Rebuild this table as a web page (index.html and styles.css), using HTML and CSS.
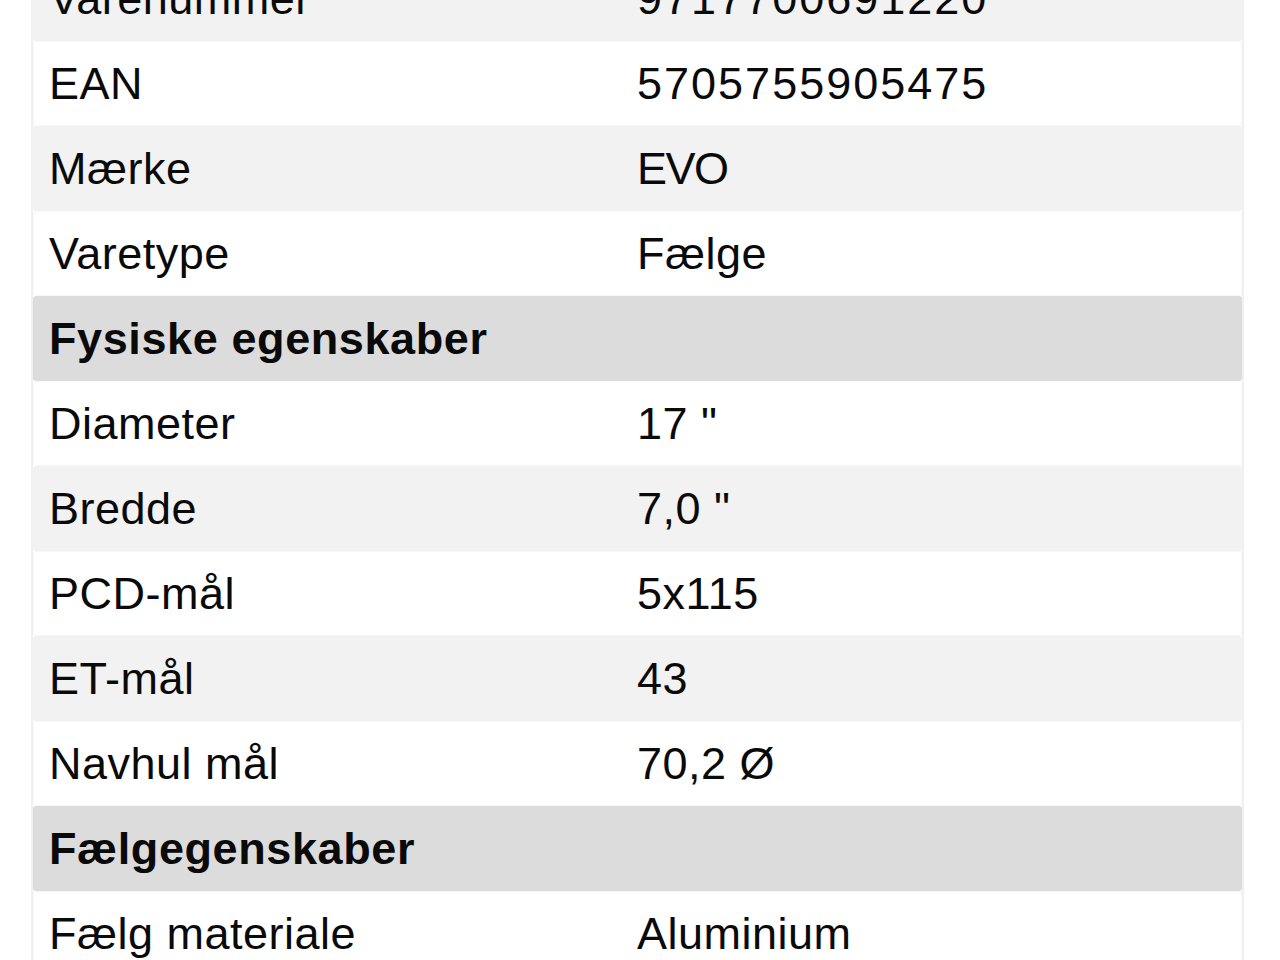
FILE: index.html
```html
<!DOCTYPE html>
<html lang="da">
<head>
<meta charset="utf-8">
<title>Specifikationer</title>
<link rel="stylesheet" href="styles.css">
</head>
<body>
<div class="specs">
  <div class="row alt"><div class="cell">Varenummer</div><div class="cell num">9717700691220</div></div>
  <div class="row"><div class="cell">EAN</div><div class="cell num">5705755905475</div></div>
  <div class="row alt"><div class="cell">Mærke</div><div class="cell tight">EVO</div></div>
  <div class="row"><div class="cell">Varetype</div><div class="cell">Fælge</div></div>
  <div class="row head"><div class="cell">Fysiske egenskaber</div><div class="cell"></div></div>
  <div class="row"><div class="cell">Diameter</div><div class="cell">17 "</div></div>
  <div class="row alt"><div class="cell">Bredde</div><div class="cell">7,0 "</div></div>
  <div class="row"><div class="cell">PCD-mål</div><div class="cell">5x115</div></div>
  <div class="row alt"><div class="cell">ET-mål</div><div class="cell">43</div></div>
  <div class="row"><div class="cell">Navhul mål</div><div class="cell">70,2 Ø</div></div>
  <div class="row head"><div class="cell">Fælgegenskaber</div><div class="cell"></div></div>
  <div class="row"><div class="cell">Fælg materiale</div><div class="cell">Aluminium</div></div>
</div>
</body>
</html>
```

FILE: styles.css
```css
html, body {
  margin: 0;
  padding: 0;
  background: #ffffff;
  overflow: hidden;
}
body {
  font-family: "Liberation Sans", Arial, sans-serif;
  color: #0a0a0a;
}
.specs {
  margin: -44px 0 0 31px;
  width: 1213px;
  border-left: 2px solid #f0f0f0;
  border-right: 2px solid #f0f0f0;
  box-sizing: border-box;
  display: flex;
  flex-direction: column;
}
.row {
  height: 85px;
  display: grid;
  grid-template-columns: 588px 1fr;
  align-items: center;
  background: #ffffff;
  border-radius: 3px;
  box-shadow: inset 0 0 0 1px #f7f7f7;
}
.row.alt {
  background: #f2f2f2;
  box-shadow: none;
}
.row.head {
  background: #dcdcdc;
  box-shadow: none;
  font-weight: bold;
}
.cell {
  padding-left: 16px;
  font-size: 45px;
  letter-spacing: 0.5px;
  line-height: 1;
  white-space: nowrap;
}
.cell.num {
  letter-spacing: 2px;
}
.cell.tight {
  letter-spacing: -1.5px;
}
.row.head .cell {
  letter-spacing: 0.6px;
}
```
